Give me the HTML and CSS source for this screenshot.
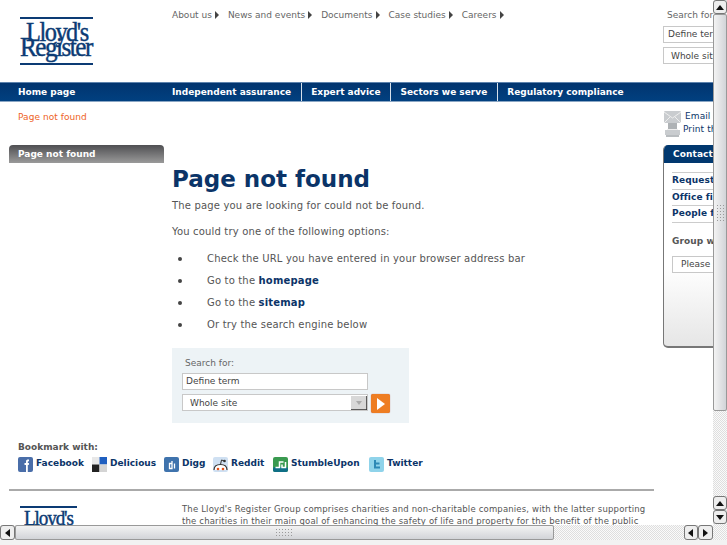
FILE: index.html
```html
<!DOCTYPE html>
<html lang="en">
<head>
<meta charset="utf-8">
<title>Page not found</title>
<link rel="stylesheet" href="styles.css">
</head>
<body>
<div class="page">
  <header class="header">
    <a class="logo"><span class="logo-l1">Lloyd's</span><span class="logo-l2">Register</span></a>
    <nav class="topnav">
      <a>About us</a><a>News and events</a><a>Documents</a><a>Case studies</a><a>Careers</a>
    </nav>
    <form class="topsearch">
      <div class="topsearch-label">Search for:</div>
      <div class="field top-field">Define term</div>
      <div class="field top-field top-select">Whole site</div>
    </form>
  </header>
  <nav class="mainnav">
    <a class="home">Home page</a>
    <a class="sep">Independent assurance</a>
    <a class="sep">Expert advice</a>
    <a class="sep">Sectors we serve</a>
    <a>Regulatory compliance</a>
  </nav>
  <div class="columns">
    <aside class="left">
      <div class="crumb">Page not found</div>
      <div class="side-head">Page not found</div>
    </aside>
    <main class="content">
      <h1>Page not found</h1>
      <p class="p1">The page you are looking for could not be found.</p>
      <p class="p2">You could try one of the following options:</p>
      <ul class="options">
        <li>Check the URL you have entered in your browser address bar</li>
        <li>Go to the <b>homepage</b></li>
        <li>Go to the <b>sitemap</b></li>
        <li>Or try the search engine below</li>
      </ul>
      <form class="search">
        <div class="search-label">Search for:</div>
        <div class="field search-field">Define term</div>
        <div class="search-row">
          <div class="field search-field search-select">Whole site
            <svg class="sel-arrow" viewBox="0 0 16 14" width="16" height="14"><rect width="16" height="14" fill="#d8d8d8"/><path d="M0 14H16V0" fill="none" stroke="#333" stroke-width="1.5"/><path d="M5 5h6l-3 4z" fill="#aaa"/></svg>
          </div>
          <div class="go"><svg viewBox="0 0 8 12" width="8" height="12"><path d="M0 0l8 6-8 6z" fill="#fff"/></svg></div>
        </div>
      </form>
    </main>
    <aside class="right">
      <div class="tools">
        <div class="tool tool-email">
          <svg viewBox="0 0 17 12" width="17" height="12"><rect width="17" height="12" rx="1" fill="#c9cccf"/><path d="M0 1l8.500 6L17 1M0 12l6-6M17 12l-6-6" fill="none" stroke="#eee" stroke-width="1"/></svg>
          <a>Email this page</a>
        </div>
        <div class="tool tool-print">
          <svg viewBox="0 0 15 14" width="15" height="14"><rect x="3" y="0" width="9" height="6" fill="#aeb2b5"/><rect x="0" y="7" width="15" height="5" fill="#c9cccf"/><rect x="2" y="6" width="11" height="1" fill="#eee"/><rect x="1" y="12" width="13" height="2" fill="#b8bcbf"/></svg>
          <a>Print this page</a>
        </div>
      </div>
      <section class="contact">
        <h2>Contact us</h2>
        <div class="contact-body">
          <ul class="contact-links">
            <li>Request information</li>
            <li>Office finder</li>
            <li>People finder</li>
          </ul>
          <div class="group">Group websites</div>
          <div class="field contact-select">Please select</div>
        </div>
      </section>
    </aside>
  </div>
  <section class="bookmark">
    <div class="bookmark-title">Bookmark with:</div>
    <div class="social">
      <a class="s-facebook"><svg viewBox="0 0 15 15" width="15" height="15"><rect width="15" height="15" rx="2" fill="#4a6ea9"/><path d="M8 15V8H6.500V6H8V4.500C8 3 9 2.500 11 2.600V4.300C10 4.300 9.800 4.500 9.800 5V6H11L10.800 8H9.800V15z" fill="#fff"/></svg>Facebook</a>
      <a class="s-delicious"><svg viewBox="0 0 15 15" width="15" height="15"><rect x="0" y="0" width="7.500" height="7.500" fill="#e8e8e8"/><rect x="7.500" y="0" width="7.500" height="7.500" fill="#1f5fc0"/><rect x="0" y="7.500" width="7.500" height="7.500" fill="#222"/><rect x="7.500" y="7.500" width="7.500" height="7.500" fill="#d4d4d4"/></svg>Delicious</a>
      <a class="s-digg"><svg viewBox="0 0 15 15" width="15" height="15"><rect width="15" height="15" rx="2" fill="#3f73ad"/><path d="M8 6.500H5.500V11.500H8V4M10.500 6.500V11.500" fill="none" stroke="#fff" stroke-width="1.300"/></svg>Digg</a>
      <a class="s-reddit"><svg viewBox="0 0 15 15" width="15" height="15"><rect width="15" height="15" rx="2" fill="#cfe0f2"/><path d="M1 13Q1 7.500 7.500 7.500T14 13" fill="#fff" stroke="#333" stroke-width="1.200"/><path d="M7.500 7.500l1-4.500 3 1" fill="none" stroke="#333"/><circle cx="11.500" cy="4" r="1.300" fill="#333"/><circle cx="5" cy="12" r="1.300" fill="#e2511a"/><circle cx="10" cy="12" r="1.300" fill="#e2511a"/></svg>Reddit</a>
      <a class="s-stumble"><svg viewBox="0 0 15 15" width="15" height="15"><rect width="15" height="15" rx="2" fill="#3a9a50"/><rect x="0" y="10" width="15" height="5" rx="2" fill="#0f6f86"/><path d="M2.500 10.500H6.500V5H10.500M12.500 5V10.500H9V7.500" fill="none" stroke="#fff" stroke-width="1.500"/></svg>StumbleUpon</a>
      <a class="s-twitter"><svg viewBox="0 0 15 15" width="15" height="15"><rect width="15" height="15" rx="2" fill="#8fd3ea"/><path d="M6 3V10.500H11M6 6.500H10.500" fill="none" stroke="#2c88b5" stroke-width="2"/></svg>Twitter</a>
    </div>
  </section>
  <footer class="footer">
    <a class="logo logo-small"><span class="logo-l1">Lloyd's</span><span class="logo-l2">Register</span></a>
    <p>The Lloyd's Register Group comprises charities and non-charitable companies, with the latter supporting the charities in their main goal of enhancing the safety of life and property for the benefit of the public</p>
  </footer>
</div>
<div class="vbar">
  <div class="vbar-btn"><svg viewBox="0 0 8 5" width="8" height="5"><path d="M0 5L4 0l4 5z" fill="#111"/></svg></div>
  <div class="vbar-thumb"><span class="grip grip-v"></span></div>
  <div class="vbar-track"></div>
  <div class="vbar-btn"><svg viewBox="0 0 8 5" width="8" height="5"><path d="M0 5L4 0l4 5z" fill="#111"/></svg></div>
  <div class="vbar-btn"><svg viewBox="0 0 8 5" width="8" height="5"><path d="M0 0L4 5l4-5z" fill="#111"/></svg></div>
</div>
<div class="hbar">
  <div class="hbar-btn"><svg viewBox="0 0 5 8" width="5" height="8"><path d="M5 0L0 4l5 4z" fill="#111"/></svg></div>
  <div class="hbar-thumb"><span class="grip grip-h"></span></div>
  <div class="hbar-track"></div>
  <div class="hbar-btn"><svg viewBox="0 0 5 8" width="5" height="8"><path d="M5 0L0 4l5 4z" fill="#111"/></svg></div>
  <div class="hbar-btn"><svg viewBox="0 0 5 8" width="5" height="8"><path d="M0 0L5 4l-5 4z" fill="#111"/></svg></div>
</div>
<div class="bottom-strip"></div>
</body>
</html>
```
FILE: styles.css
```css
html, body { margin: 0; height: 545px; width: 727px; overflow: hidden; background: #fff; }
body { font-family: "DejaVu Sans", sans-serif; font-size: 10px; color: #555; position: relative; }
p, h1, h2, ul { margin: 0; padding: 0; }
ul { list-style: none; }
.page { width: 860px; height: 545px; overflow: hidden; }

.header { height: 82px; display: flex; position: relative; }
.logo { display: block; font-family: "Liberation Serif", serif; color: #0c3b74; width: 73px; height: 48px; margin: 17px 0 0 20px; border-top: 2px solid #0c3b74; border-bottom: 2px solid #0c3b74; box-sizing: border-box; white-space: nowrap; -webkit-text-stroke: .45px #0c3b74; flex: none; }
.logo-l1, .logo-l2 { display: block; transform-origin: left center; }
.logo-l1 { font-size: 28px; line-height: 24px; letter-spacing: -1.700px; margin: 1px 0 0 6px; transform: scaleX(.87); }
.logo-l2 { font-size: 28px; line-height: 16px; letter-spacing: -1.700px; margin-top: -5px; transform: scaleX(.9); }
.topnav { display: flex; gap: 9px; margin: 9px 0 0 79px; height: 13px; line-height: 13px; width: 491px; flex: none; font-size: 9px; color: #666; }
.topnav a::after { content: ""; display: inline-block; margin-left: 3px; border-left: 4px solid #444; border-top: 4px solid transparent; border-bottom: 4px solid transparent; vertical-align: -1px; }
.topsearch { width: 150px; flex: none; }
.topsearch-label { margin: 9px 0 0 4px; line-height: 13px; font-size: 9px; color: #666; }
.field { box-sizing: border-box; background: #fff; border: 1px solid #c8c8c8; color: #444; font-size: 9px; }
.top-field { width: 120px; height: 17px; line-height: 15px; margin-top: 4px; padding-left: 4px; }
.top-select { padding-left: 7px; line-height: 17px; }

.mainnav { height: 20px; background: linear-gradient(#02356f, #014080); border-top: 1px solid #5d83ad; border-bottom: 1px solid #8aa6c4; box-sizing: border-box; display: flex; color: #fff; font-weight: bold; font-size: 9px; line-height: 18px; }
.mainnav a { padding: 0 9.500px; }
.mainnav .home { padding: 0; margin-left: 18px; width: 154px; flex: none; }
.mainnav .sep { border-right: 1px solid #d6e0ea; }
.mainnav .home + .sep { padding-left: 0; }

.columns { display: flex; height: 324px; }
.left { width: 155px; margin-left: 9px; flex: none; }
.crumb { margin: 9px 0 0 9px; color: #ee6226; line-height: 13px; font-size: 9px; letter-spacing: .05px; }
.side-head { margin-top: 21px; height: 18px; border-radius: 4px 4px 0 0; background: linear-gradient(#4f4f52, #9a9a9a); color: #fff; font-weight: bold; font-size: 9px; line-height: 18px; padding-left: 9px; box-sizing: border-box; }

.content { width: 482px; margin-left: 8px; flex: none; }
h1 { margin-top: 62px; font-size: 23px; line-height: 30px; color: #0b3468; font-weight: bold; }
.p1 { margin-top: 4px; line-height: 16px; letter-spacing: .17px; color: #555; }
.p2 { margin-top: 10px; line-height: 16px; letter-spacing: .17px; color: #555; }
.options { margin-top: 8px; }
.options li { height: 22px; line-height: 22px; padding-left: 35px; position: relative; letter-spacing: .17px; color: #555; }
.options li::before { content: ""; position: absolute; left: 6px; top: 9px; width: 4px; height: 4px; border-radius: 50%; background: #444; }
.options b { color: #0b3468; font-weight: bold; }

.search { margin-top: 12px; width: 237px; height: 75px; background: #edf3f6; box-sizing: border-box; padding: 9px 0 0 10px; }
.search-label { margin-left: 3px; line-height: 13px; font-size: 9px; color: #666; }
.search-field { width: 186px; height: 17px; line-height: 15px; margin-top: 3px; padding-left: 3px; }
.search-row { display: flex; gap: 3px; }
.search-row .search-select { margin-top: 4px; padding-left: 7px; position: relative; line-height: 17px; }
.sel-arrow { position: absolute; right: 0; top: 1px; }
.go { width: 19px; height: 19px; margin-top: 4px; border-radius: 2px; background: #ee7d22; display: flex; align-items: center; justify-content: center; box-shadow: 0 0 1px #a55; }

.right { flex: none; width: 150px; margin-left: 9px; }
.tools { margin: 9px 0 0 1px; height: 27px; }
.tool { display: flex; align-items: center; color: #0b3468; font-size: 9px; letter-spacing: .1px; white-space: nowrap; }
.tool a { margin-top: -2px; }
.tool-email { gap: 4px; height: 12px; }
.tool-print { gap: 3px; height: 14px; }
.tool-print svg { margin-left: 1px; }
.contact { margin-top: 7px; width: 150px; height: 203px; border-radius: 5px 0 0 5px; overflow: hidden; border-left: 1px solid #777; border-bottom: 2px solid #777; box-sizing: border-box; background: linear-gradient(#fff 60%, #e6e6e6); }
.contact h2 { height: 18px; margin-left: -1px; background: #01386f; color: #fff; font-size: 9px; line-height: 18px; padding-left: 10px; letter-spacing: .1px; }
.contact-body { padding: 9px 0 0 8px; }
.contact-links { border-top: 1px solid #ccc; }
.contact-links li { height: 15.500px; line-height: 15px; border-bottom: 1px solid #ccc; color: #0b3468; font-weight: bold; font-size: 9px; letter-spacing: .1px; }
.group { margin-top: 11px; line-height: 14px; font-weight: bold; color: #555; font-size: 9px; letter-spacing: .1px; }
.contact-select { margin-top: 8px; width: 120px; height: 17px; line-height: 15px; padding-left: 8px; }

.bookmark { margin: 0 0 0 18px; height: 49px; }
.bookmark-title { margin-top: 14px; line-height: 14px; font-weight: bold; font-size: 9px; color: #555; }
.social { display: flex; margin-top: 3px; font-weight: bold; font-size: 9px; color: #0b3468; line-height: 13px; }
.social a { display: flex; gap: 3px; white-space: nowrap; }
.s-facebook { width: 74px; } .s-delicious { width: 72px; } .s-digg { width: 49px; } .s-reddit { width: 60px; } .s-stumble { width: 96px; }

.footer { margin-left: 9px; width: 645px; border-top: 2px solid #aaa; display: flex; }
.logo-small { width: 57px; height: 40px; margin: 15px 0 0 11px; border-bottom: 0; }
.logo-small .logo-l1 { font-size: 22px; line-height: 19px; letter-spacing: -1.300px; margin: 0 0 0 4px; }
.logo-small .logo-l2 { font-size: 22px; line-height: 16px; letter-spacing: -1.300px; margin-top: 0; }
.footer p { margin: 12px 0 0 105px; width: 470px; flex: none; line-height: 12px; font-size: 8.500px; letter-spacing: .17px; color: #555; }

.vbar, .hbar { position: absolute; background: repeating-conic-gradient(#dedede 0 25%, #fafafa 0 50%) 0 0 / 2px 2px; display: flex; }
.vbar { top: 0; right: 0; width: 14px; height: 525px; flex-direction: column; }
.hbar { left: 0; top: 525px; width: 727px; height: 15px; }
.bottom-strip { position: absolute; left: 0; top: 540px; width: 727px; height: 5px; background: #f2f2f2; }
.vbar-btn, .hbar-btn { box-sizing: border-box; flex: none; display: flex; align-items: center; justify-content: center; background: #eee; border: 1px solid #777; border-radius: 3px; }
.vbar-btn { width: 14px; height: 14px; }
.hbar-btn { width: 14.500px; height: 15px; }
.vbar-thumb { box-sizing: border-box; flex: none; height: 397px; width: 14px; background: linear-gradient(90deg, #f3f3f3, #d2d4d8); border: 1px solid #999; border-radius: 2px; display: flex; align-items: center; justify-content: center; }
.vbar-track { height: 85px; flex: none; }
.hbar-thumb { box-sizing: border-box; flex: none; width: 539px; height: 15px; background: linear-gradient(#f3f3f3, #d2d4d8); border: 1px solid #999; border-radius: 2px; display: flex; align-items: center; justify-content: center; }
.hbar-track { flex: none; width: 130px; }
.grip { display: block; background: radial-gradient(#9a9a9a 40%, transparent 45%) 0 0 / 3px 3px; }
.grip-v { width: 9px; height: 18px; }
.grip-h { width: 18px; height: 9px; }
```
